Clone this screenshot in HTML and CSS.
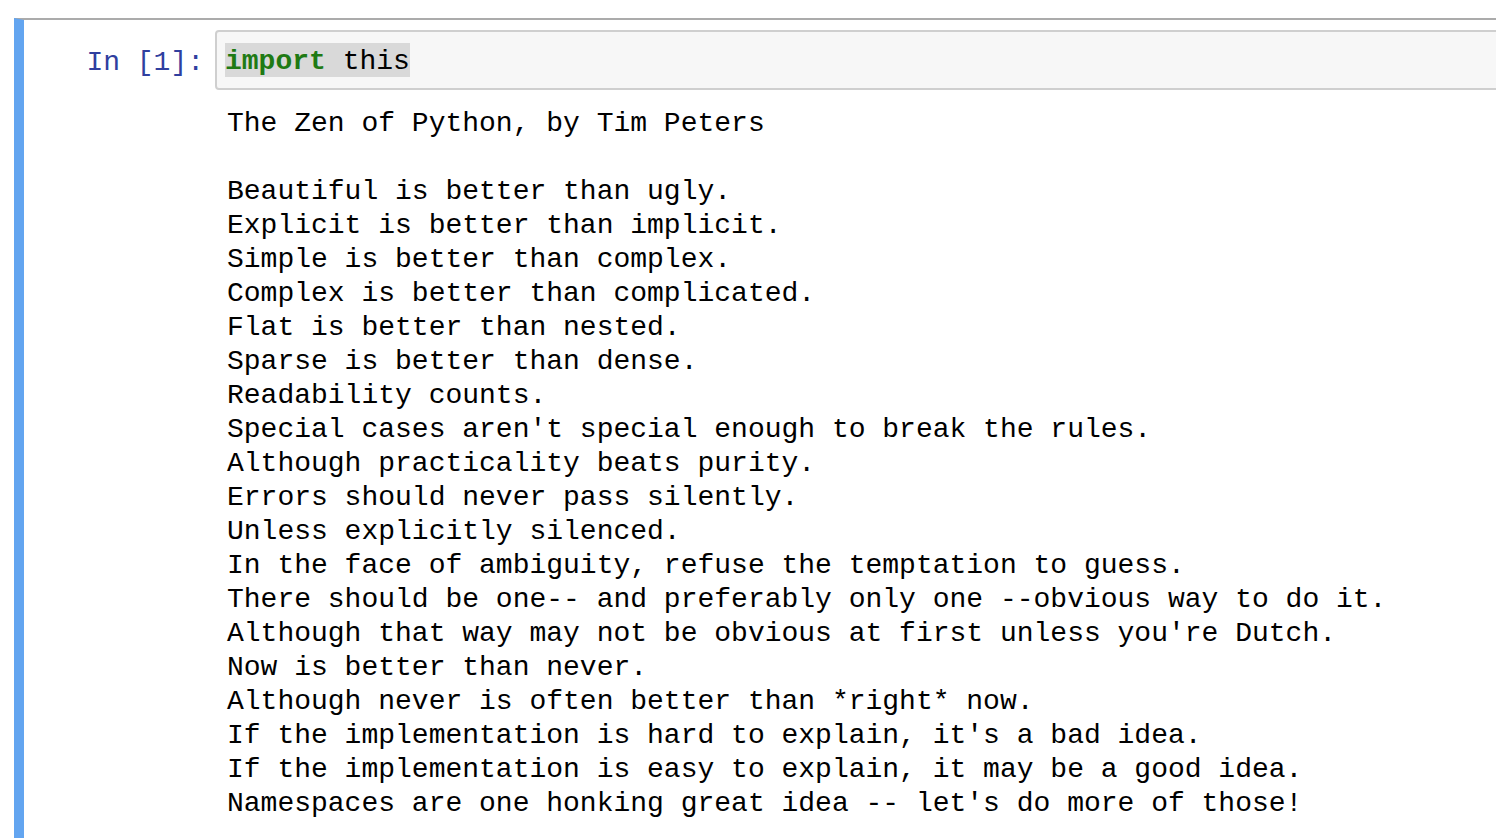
FILE: index.html
```html
<!DOCTYPE html>
<html>
<head>
<meta charset="utf-8">
<link rel="stylesheet" href="styles.css">
</head>
<body>
<div class="notebook">
  <div class="cell selected">
    <div class="input">
      <div class="prompt input-prompt">In&nbsp;[1]:</div>
      <div class="input-area"><pre class="code"><span class="match"><span class="kw">import</span> this</span></pre></div>
    </div>
    <div class="output">
      <div class="prompt"></div>
<pre class="out">The Zen of Python, by Tim Peters

Beautiful is better than ugly.
Explicit is better than implicit.
Simple is better than complex.
Complex is better than complicated.
Flat is better than nested.
Sparse is better than dense.
Readability counts.
Special cases aren't special enough to break the rules.
Although practicality beats purity.
Errors should never pass silently.
Unless explicitly silenced.
In the face of ambiguity, refuse the temptation to guess.
There should be one-- and preferably only one --obvious way to do it.
Although that way may not be obvious at first unless you're Dutch.
Now is better than never.
Although never is often better than *right* now.
If the implementation is hard to explain, it's a bad idea.
If the implementation is easy to explain, it may be a good idea.
Namespaces are one honking great idea -- let's do more of those!</pre>
    </div>
  </div>
</div>
</body>
</html>
```

FILE: styles.css
```css
html, body {
  margin: 0;
  padding: 0;
  background: #ffffff;
}
body {
  height: 838px;
  overflow: hidden;
}
.notebook {
  padding-top: 18px;
  padding-left: 14px;
  margin-right: -40px;
}
.cell {
  border-top: 2px solid #ababab;
  border-left: 10px solid #63a5f0;
  padding: 10px 10px 40px 10px;
}
.input, .output {
  display: flex;
  align-items: flex-start;
}
.prompt {
  flex: 0 0 181px;
  width: 181px;
  box-sizing: border-box;
  padding-right: 11px;
  text-align: right;
  font-family: "Liberation Mono", monospace;
  font-size: 28px;
  line-height: 34px;
}
.input-prompt {
  color: #303f9f;
  padding-top: 16px;
}
.input-area {
  flex: 1;
  height: 60px;
  box-sizing: border-box;
  overflow: hidden;
  background: #f7f7f7;
  border: 2px solid #cfcfcf;
  border-radius: 4px;
  padding: 11px 8px 0 8px;
}
.code, .out {
  margin: 0;
  font-family: "Liberation Mono", monospace;
  font-size: 28px;
  line-height: 34px;
  color: #000;
}
.match {
  background: #d9d9d9;
  display: inline-block;
  vertical-align: top;
  line-height: 30px;
  padding-top: 4px;
}
.kw {
  color: #1f7a14;
  font-weight: bold;
}
.output {
  margin-top: 17px;
}
.out {
  padding-left: 12px;
}
```
